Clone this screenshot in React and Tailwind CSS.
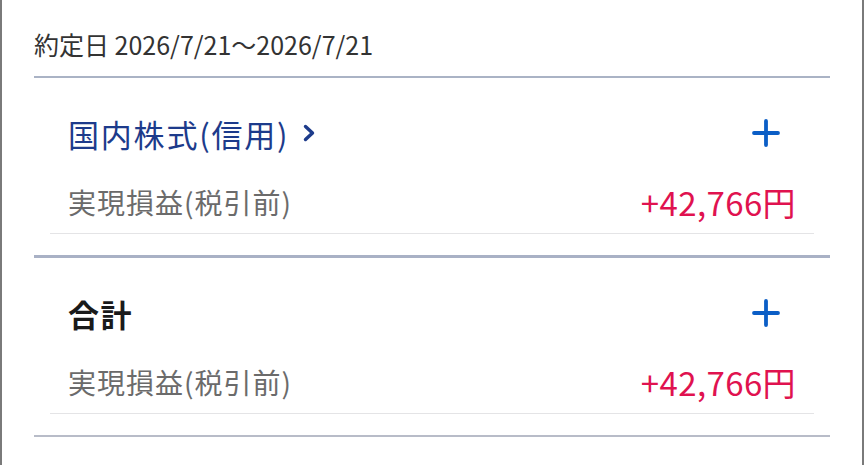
const font = { fontFamily: '"Noto Sans CJK JP", "Noto Sans", sans-serif' };

function Plus() {
  return (
    <svg width="28" height="28" viewBox="0 0 28 28" className="shrink-0">
      <path d="M14 2v24M2 14h24" stroke="#0b5ec6" strokeWidth="3.8" strokeLinecap="round" fill="none" />
    </svg>
  );
}

function Chevron() {
  return (
    <svg width="13" height="18" viewBox="0 0 13 18" className="ml-[14px] shrink-0">
      <path d="M2.5 2.5l7 6.5-7 6.5" stroke="#1d3b8b" strokeWidth="3.4" strokeLinecap="round" strokeLinejoin="round" fill="none" />
    </svg>
  );
}

function Section({ title, link, thick }) {
  return (
    <div className={thick ? "border-b-[3px] border-[#a9b1c5] px-[16px] pb-[21px]" : "border-b-2 border-[#b8bcc8] px-[16px] pb-[21px]"}>
      <div className="border-b border-[#e4e4e6] px-[18px] pb-[11px]">
        <div className="box-content flex h-[58px] items-center justify-between pt-[26px]">
          {link ? (
            <div className="flex items-center text-[31px] leading-none tracking-[1.8px] text-[#1d3b8b]">
              {title}
              <Chevron />
            </div>
          ) : (
            <div className="text-[31px] font-bold leading-none tracking-[1.5px] text-[#1a1a1a]">{title}</div>
          )}
          <div className="mr-[16px]">
            <Plus />
          </div>
        </div>
        <div className="mt-[20px] flex h-[40px] items-center justify-between">
          <span className="text-[28px] leading-none tracking-[1px] text-[#6b6b6b]">実現損益(税引前)</span>
          <span className="text-[33px] leading-none tracking-[0.4px] text-[#e0124f]">+42,766円</span>
        </div>
      </div>
    </div>
  );
}

export default function App() {
  return (
    <div className="h-[465px] w-full overflow-hidden border-x-2 border-[#7a7a7a] bg-white px-[32px]" style={font}>
      <div className="border-b-2 border-[#aab3c5] pb-[17px] pt-[29px] text-[25px] leading-[30px] text-[#333333]">
        約定日 2026/7/21〜2026/7/21
      </div>
      <Section title="国内株式(信用)" link thick />
      <Section title="合計" />
    </div>
  );
}
